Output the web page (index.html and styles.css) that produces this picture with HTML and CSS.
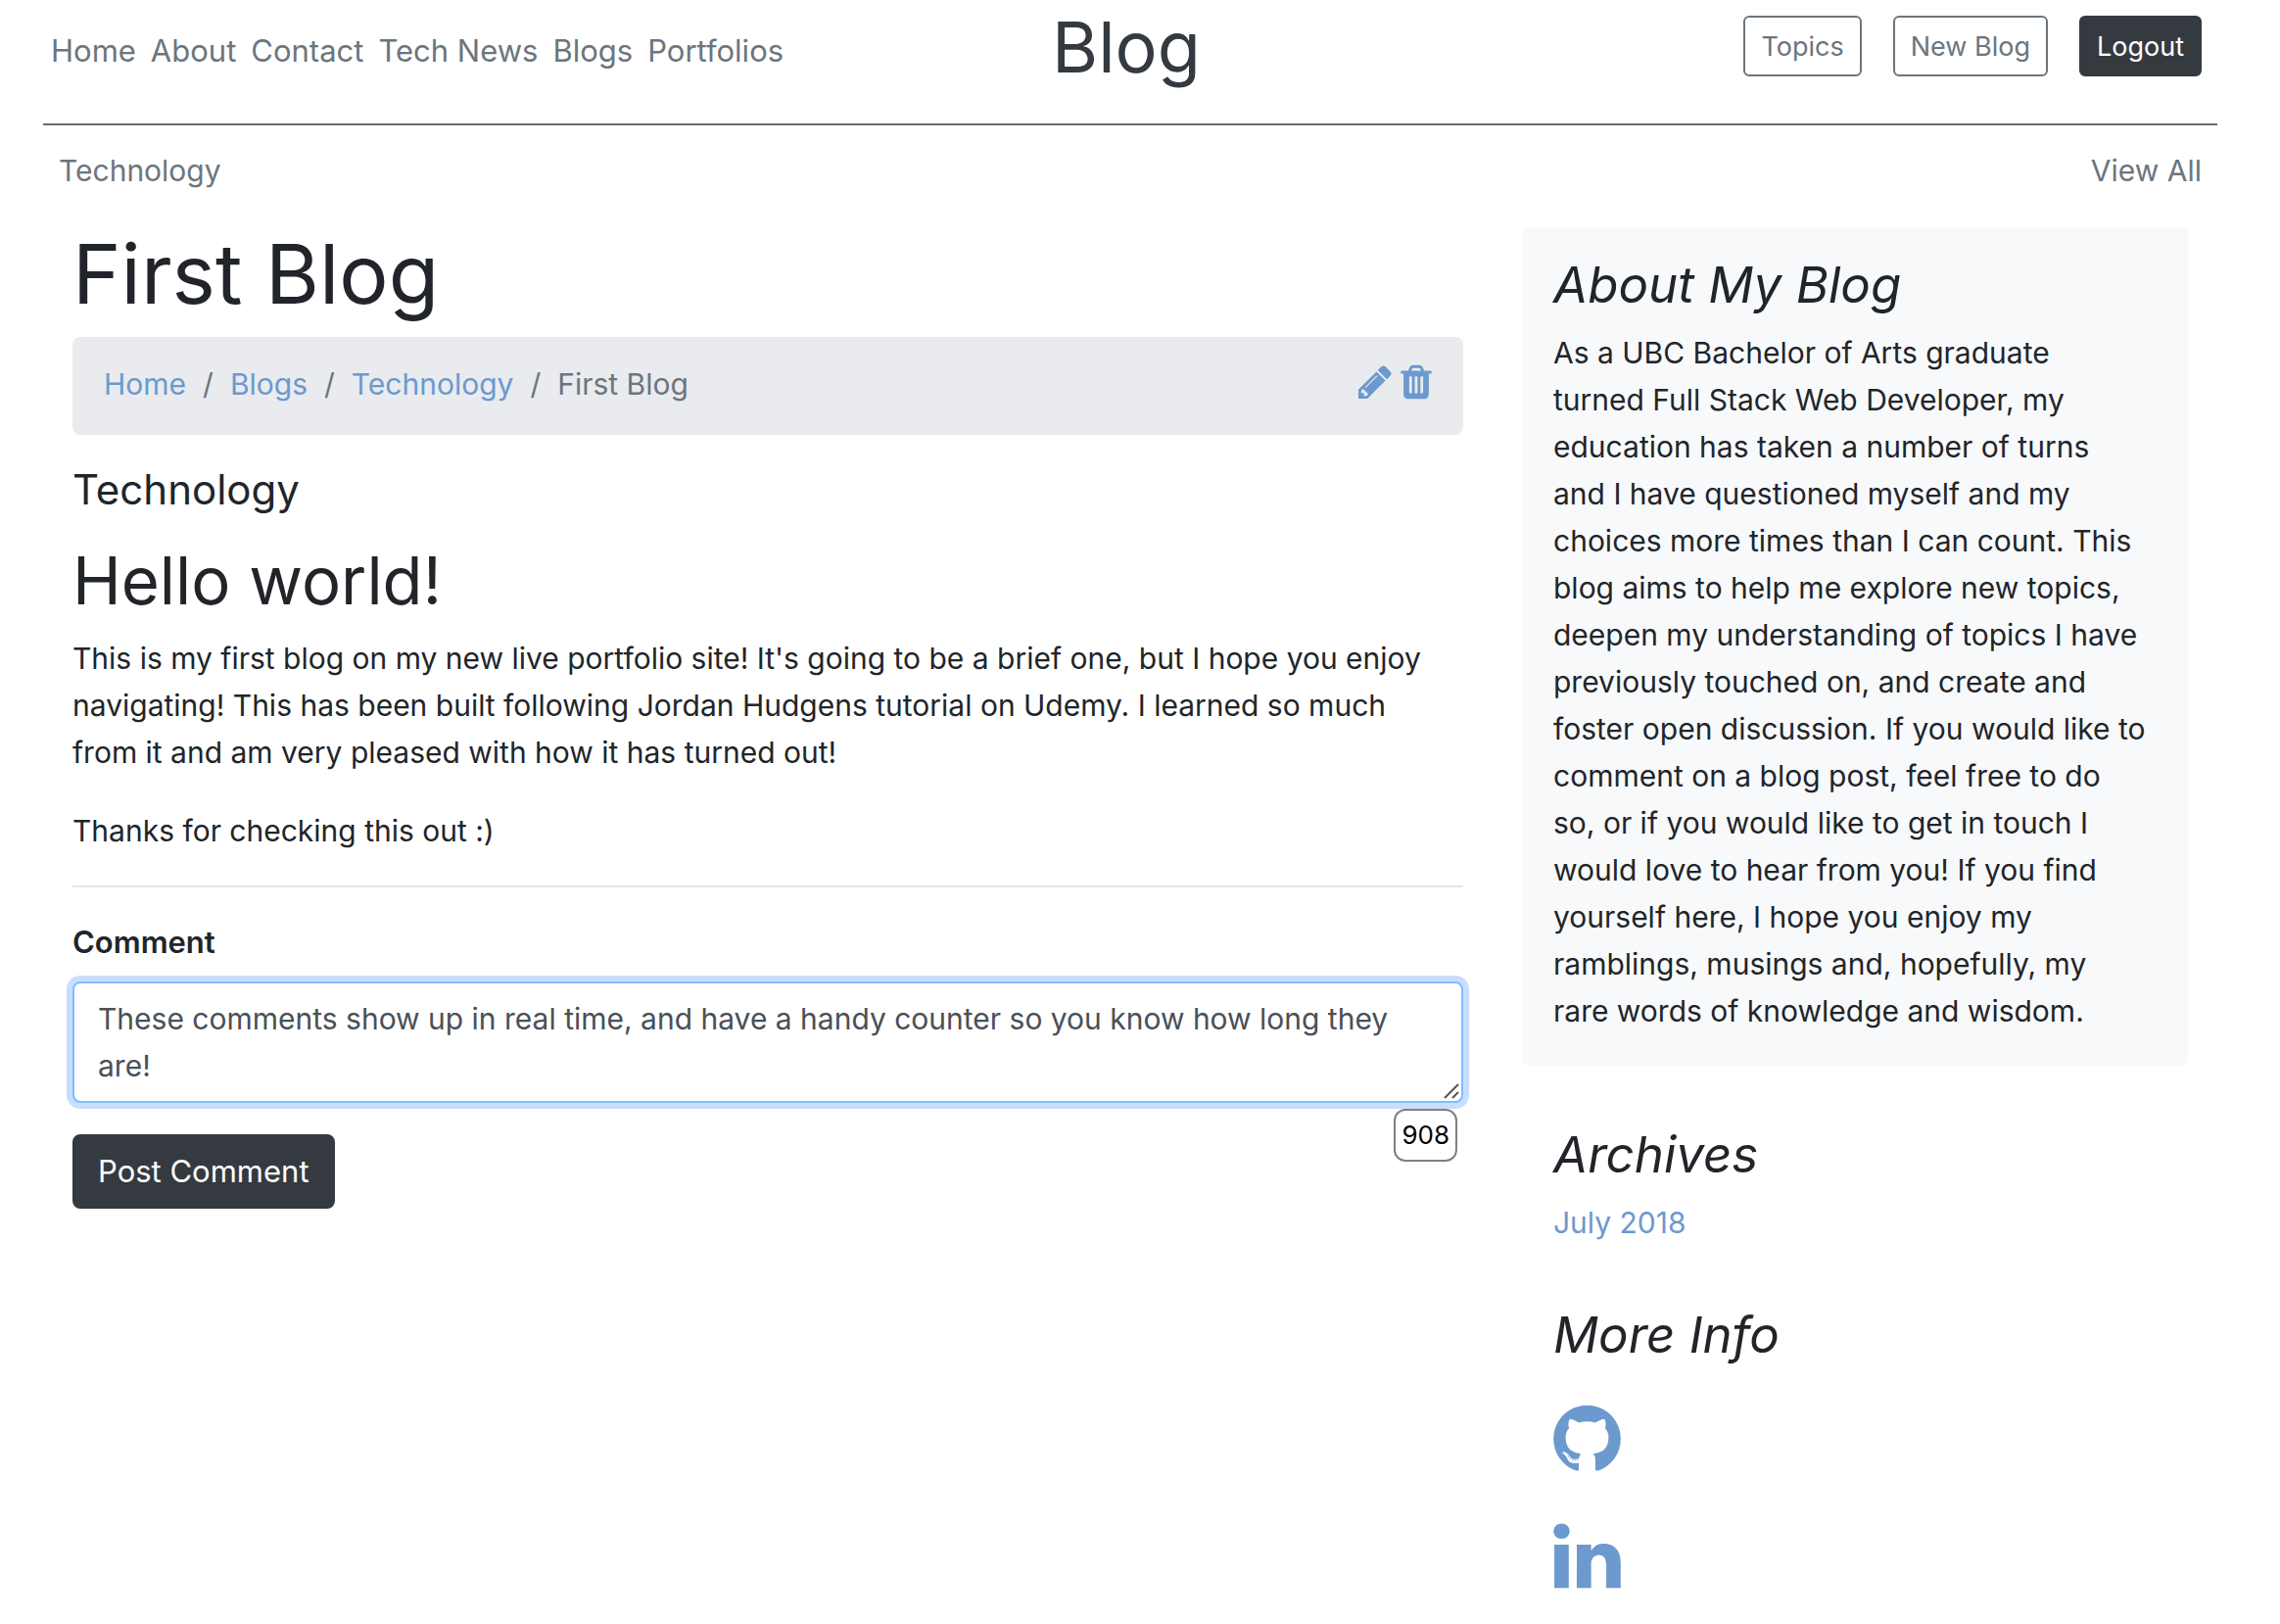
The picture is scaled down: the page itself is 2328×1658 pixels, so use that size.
FILE: index.html
```html
<!DOCTYPE html>
<html lang="en">
<head>
  <meta charset="utf-8">
  <title>First Blog</title>
  <link rel="stylesheet" href="styles.css">
</head>
<body>
  <div class="page">
    <header class="site-header">
      <nav class="site-nav">
        <a href="#">Home</a>
        <a href="#">About</a>
        <a href="#">Contact</a>
        <a href="#">Tech News</a>
        <a href="#">Blogs</a>
        <a href="#">Portfolios</a>
      </nav>
      <a class="logo" href="#">Blog</a>
      <div class="actions">
        <button class="btn-sm" type="button">Topics</button>
        <button class="btn-sm" type="button">New Blog</button>
        <button class="btn-sm btn-dark" type="button">Logout</button>
      </div>
    </header>

    <nav class="topics">
      <a href="#">Technology</a>
      <a href="#">View All</a>
    </nav>

    <div class="columns">
      <main class="post">
        <h1>First Blog</h1>
        <div class="breadcrumb">
          <ol class="crumbs">
            <li><a href="#">Home</a></li>
            <li><a href="#">Blogs</a></li>
            <li><a href="#">Technology</a></li>
            <li>First Blog</li>
          </ol>
          <div class="tools">
            <a href="#" aria-label="Edit">
              <svg width="34" height="40" viewBox="128 0 1536 1792"><path d="M491 1536l91-91-235-235-91 91v107h128v128h107zm523-928q0-22-22-22-10 0-17 7l-542 542q-7 7-7 17 0 22 22 22 10 0 17-7l542-542q7-7 7-17zm-54-192l416 416-832 832h-416v-416zm683 96q0 53-37 90l-166 166-416-416 166-165q36-38 90-38 53 0 91 38l235 234q37 39 37 91z"/></svg>
            </a>
            <a href="#" aria-label="Delete">
              <svg width="32" height="40" viewBox="192 0 1408 1792"><path d="M704 1376v-704q0-14-9-23t-23-9h-64q-14 0-23 9t-9 23v704q0 14 9 23t23 9h64q14 0 23-9t9-23zm256 0v-704q0-14-9-23t-23-9h-64q-14 0-23 9t-9 23v704q0 14 9 23t23 9h64q14 0 23-9t9-23zm256 0v-704q0-14-9-23t-23-9h-64q-14 0-23 9t-9 23v704q0 14 9 23t23 9h64q14 0 23-9t9-23zm-544-992h448l-48-117q-7-9-17-11h-317q-10 2-17 11zm928 32v64q0 14-9 23t-23 9h-96v948q0 83-47 143.500t-113 60.500h-832q-66 0-113-58.500t-47-141.500v-952h-96q-14 0-23-9t-9-23v-64q0-14 9-23t23-9h309l70-167q15-37 54-63t79-26h320q40 0 79 26t54 63l70 167h309q14 0 23 9t9 23z"/></svg>
            </a>
          </div>
        </div>

        <h5>Technology</h5>
        <h2>Hello world!</h2>
        <p>This is my first blog on my new live portfolio site! It's going to be a brief one, but I hope you enjoy<br>
          navigating! This has been built following Jordan Hudgens tutorial on Udemy. I learned so much<br>
          from it and am very pleased with how it has turned out!</p>
        <p>Thanks for checking this out :)</p>
        <hr>

        <form class="comment-form">
          <label for="comment">Comment</label>
          <div class="field">
            <textarea id="comment" rows="2">These comments show up in real time, and have a handy counter so you know how long they are!</textarea>
            <svg class="grip" width="16" height="16" viewBox="0 0 16 16"><path d="M1 15L15 1M9 15L15 9"/></svg>
            <span class="counter">908</span>
          </div>
          <button class="btn-dark btn-post" type="submit">Post Comment</button>
        </form>
      </main>

      <aside class="sidebar">
        <section class="module module-shaded">
          <h4>About My Blog</h4>
          <p>As a UBC Bachelor of Arts graduate<br>
            turned Full Stack Web Developer, my<br>
            education has taken a number of turns<br>
            and I have questioned myself and my<br>
            choices more times than I can count. This<br>
            blog aims to help me explore new topics,<br>
            deepen my understanding of topics I have<br>
            previously touched on, and create and<br>
            foster open discussion. If you would like to<br>
            comment on a blog post, feel free to do<br>
            so, or if you would like to get in touch I<br>
            would love to hear from you! If you find<br>
            yourself here, I hope you enjoy my<br>
            ramblings, musings and, hopefully, my<br>
            rare words of knowledge and wisdom.</p>
        </section>
        <section class="module">
          <h4>Archives</h4>
          <a href="#">July 2018</a>
        </section>
        <section class="module">
          <h4>More Info</h4>
          <ul class="social">
            <li><a href="#" aria-label="GitHub">
              <svg width="69" height="80" viewBox="128 0 1536 1792"><path d="M896 128q209 0 385.500 103t279.500 279.500 103 385.500q0 251-146.500 451.500t-378.500 277.500q-27 5-40-7t-13-30q0-3 .5-76.500t.5-134.500q0-97-52-142 57-6 102.500-18t94-39 81-66.500 53-105 20.500-150.500q0-119-79-206 37-91-8-204-28-9-81 11t-92 44l-38 24q-93-26-192-26t-192 26q-16-11-42.500-27t-83.500-38.500-85-13.500q-45 113-8 204-79 87-79 206 0 85 20.500 150t52.500 105 80.500 67 94 39 102.500 18q-39 36-49 103-21 10-45 15t-57 5-65.500-21.500-55.500-62.500q-19-32-48.500-52t-49.500-24l-20-3q-21 0-29 4.500t-5 11.500 9 14 13 12l7 5q22 10 43.500 38t31.500 51l10 23q13 38 44 61.500t67 30 69.500 7 55.500-3.500l23-4q0 38 .5 88.500t.5 54.500q0 18-13 30t-40 7q-232-77-378.500-277.500t-146.500-451.500q0-209 103-385.500t279.500-279.500 385.500-103zm-477 1103q3-7-7-12-10-3-13 2-3 7 7 12 9 6 13-2zm31 34q7-5-2-16-10-9-16-3-7 5 2 16 10 10 16 3zm30 45q9-7 0-19-8-13-17-6-9 5 0 18t17 7zm42 42q8-8-4-19-12-12-20-3-9 8 4 19 12 12 20 3zm57 25q3-11-13-16-15-4-19 7t13 15q15 6 19-6zm63 5q0-13-17-11-16 0-16 11 0 13 17 11 16 0 16-11zm58-10q-2-11-18-9-16 3-14 15t18 8 14-14z"/></svg>
            </a></li>
            <li><a href="#" aria-label="LinkedIn">
              <svg width="69" height="80" viewBox="128 0 1536 1792"><path d="M477 625v991h-330v-991h330zm21-306q1 73-50.500 122t-135.500 49h-2q-82 0-132-49t-50-122q0-74 51.500-122.500t134.500-48.500 133 48.500 51 122.500zm1166 729v568h-329v-530q0-105-40.500-164.500t-126.500-59.500q-63 0-105.500 34.500t-63.500 85.500q-11 30-11 81v553h-329q2-399 2-647t-1-296l-1-48h329v144h-2q20-32 41-56t56.500-52 87-43.500 114.500-15.500q171 0 275 113.500t104 332.500z"/></svg>
            </a></li>
          </ul>
        </section>
      </aside>
    </div>
  </div>
</body>
</html>
```
FILE: styles.css
```css
* { box-sizing: border-box; }

body {
  margin: 0;
  padding-right: 20px;
  background: #fff;
  color: #212529;
  font-family: Inter, "Liberation Sans", sans-serif;
  font-size: 30px;
  line-height: 48px;
}

a { color: #6c99ce; text-decoration: none; }
svg { display: block; fill: currentColor; }
h1, h2, h4, h5 { margin: 0 0 16px; font-weight: 400; }
h1 { font-size: 84px; line-height: 96px; }
h2 { font-size: 67px; line-height: 78px; }
h4 { font-size: 51px; line-height: 58px; font-style: italic; }
h5 { margin-bottom: 30px; font-size: 42px; line-height: 48px; }
p { margin: 0 0 32px; }
hr { margin: 32px 0; border: 0; border-top: 2px solid #e5e5e5; }

.page { max-width: 2280px; margin: 0 auto; padding: 0 30px; }

.site-header {
  display: grid;
  grid-template-columns: 1fr auto 1fr;
  align-items: start;
  padding: 0 16px 0 8px;
  height: 128px;
  border-bottom: 2px solid #6c6a6b;
}
.site-nav { display: flex; gap: 15px; padding-top: 28px; font-size: 31px; }
.site-nav a, .topics a { color: #6c757d; white-space: nowrap; }
.logo { padding-top: 4px; color: #343a40; font-size: 72px; line-height: 88px; }
.actions { display: flex; justify-content: flex-end; gap: 32px; padding-top: 16px; }

button {
  border: 2px solid #6c757d;
  border-radius: 6px;
  background: #fff;
  color: #6c757d;
  font-family: inherit;
}
.btn-sm { padding: 9px 16px 7px; font-size: 27px; line-height: 42px; }
.btn-dark { border-color: #343a40; background: #343a40; color: #fff; }
.btn-post { padding: 12px 24px; border-radius: 8px; font-size: 31px; line-height: 48px; }

.topics { display: flex; justify-content: space-between; padding: 22px 16px 34px; }

.columns { display: grid; grid-template-columns: 2fr 1fr; }
.post, .sidebar { min-width: 0; padding: 0 30px; }

.breadcrumb {
  display: flex;
  justify-content: space-between;
  margin-bottom: 32px;
  padding: 24px 32px 28px;
  border-radius: 8px;
  background: #e9ebef;
}
.crumbs { display: flex; margin: 0; padding: 0; list-style: none; color: #6c757d; }
.crumbs li + li::before { content: "/"; padding: 0 17px; }
.tools { display: flex; gap: 9px; padding-top: 2px; }

.comment-form label { display: block; margin-bottom: 16px; font-size: 31px; font-weight: 600; }
.field { position: relative; margin-bottom: 32px; }
.field textarea {
  display: block;
  width: 100%;
  height: 124px;
  padding: 12px 24px;
  border: 2px solid #80bdff;
  border-radius: 8px;
  outline: 0;
  box-shadow: 0 0 0 6px #c8deff;
  color: #495057;
  font: inherit;
  overflow: hidden;
  resize: none;
}
.grip {
  position: absolute;
  right: 4px;
  bottom: 4px;
  fill: none;
  stroke: #555;
  stroke-width: 2;
}
.counter {
  position: absolute;
  top: 130px;
  right: 6px;
  padding: 0 6px;
  border: 2px solid #808080;
  border-radius: 12px;
  background: #fff;
  color: #000;
  font-size: 26px;
  line-height: 50px;
}

.module { margin-bottom: 32px; padding: 30px 32px 0; }
.module-shaded { padding-bottom: 32px; border-radius: 8px; background: #f8f9fb; }
.module p { margin: 0; }
.module:last-child { margin-bottom: 0; }
.social { margin: 0; padding: 0; list-style: none; }
.social li { padding: 21px 0 19px; }
.social a { display: inline-block; vertical-align: top; }
```
